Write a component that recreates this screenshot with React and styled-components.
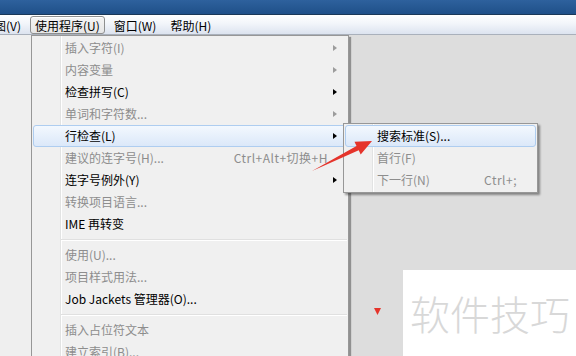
import React from 'react';
import styled, { createGlobalStyle, css } from 'styled-components';

const GlobalStyle = createGlobalStyle`
  html, body {
    margin: 0;
    padding: 0;
    overflow: hidden;
  }
  body {
    font-family: "Noto Sans CJK SC", "Noto Sans", sans-serif;
    font-size: 12px;
  }
`;

const Screen = styled.div`
  position: relative;
  width: 576px;
  height: 356px;
  overflow: hidden;
  display: flex;
  flex-direction: column;
  background: #dddddd;
`;

const TitleBar = styled.div`
  height: 14px;
  flex-shrink: 0;
  background: linear-gradient(to bottom, #2e619d, #1f5089);
  border-bottom: 1px solid #1a3858;
`;

const MenuBar = styled.div`
  height: 19px;
  flex-shrink: 0;
  display: flex;
  align-items: center;
  gap: 4px;
  background: linear-gradient(to bottom, #ffffff 0%, #f2f5fa 45%, #dce3ef 100%);
  border-bottom: 1px solid #a9b0bb;
`;

const BarItem = styled.div`
  height: 18px;
  line-height: 17px;
  padding: 0 4px;
  border: 1px solid transparent;
  border-radius: 3px;
  color: #000;
  white-space: nowrap;
  box-sizing: border-box;
  ${p => p.$first && css`margin-left: -23px;`}
  ${p => p.$open && css`
    border-color: #8e8f8f;
    background: linear-gradient(to bottom, #f4f4f4, #e6e6e6);
    box-shadow: inset 0 1px 0 #fff;
  `}
`;

const Workspace = styled.div`
  flex: 1;
  display: flex;
  align-items: flex-start;
  min-height: 0;
`;

const LeftPane = styled.div`
  width: 31px;
  align-self: stretch;
  background: #efefef;
`;

const gutter = css`
  background-color: #f0f0f0;
  background-image: linear-gradient(
    to right,
    transparent 28px,
    #e2e3e3 28px,
    #e2e3e3 29px,
    #ffffff 29px,
    #ffffff 30px,
    transparent 30px
  );
`;

const Menu = styled.div`
  width: 318px;
  box-sizing: border-box;
  border: 1px solid #979797;
  padding: 1px;
  ${gutter}
  box-shadow: 2px 2px 1px rgba(0, 0, 0, 0.35);
`;

const SubMenu = styled(Menu)`
  position: absolute;
  left: 343px;
  top: 123px;
  width: 195px;
  box-shadow: 2px 2px 2px rgba(0, 0, 0, 0.4);
`;

const Item = styled.div`
  display: grid;
  grid-template-columns: 1fr auto 18px;
  align-items: center;
  height: 22px;
  line-height: 20px;
  box-sizing: border-box;
  padding-left: 31px;
  border: 1px solid transparent;
  border-radius: 3px;
  color: ${p => (p.$disabled ? '#8d8d8d' : '#000')};
  white-space: nowrap;
  ${p => p.$active && css`
    border-color: #aecdf0;
    background: linear-gradient(to bottom, #f3f8fe, #dbe8f9);
  `}
`;

const Shortcut = styled.span`
  color: #8d8d8d;
  letter-spacing: 0.5px;
`;

const Arrow = styled.span`
  justify-self: start;
  margin-left: 5px;
  width: 0;
  height: 0;
  border-top: 3.5px solid transparent;
  border-bottom: 3.5px solid transparent;
  border-left: 4px solid ${p => (p.$disabled ? '#9c9c9c' : '#000')};
`;

const Separator = styled.div`
  height: 9px;
  margin-left: 28px;
  background: linear-gradient(
    to bottom,
    transparent 4px,
    #e0e0e0 4px,
    #e0e0e0 5px,
    #ffffff 5px,
    #ffffff 6px,
    transparent 6px
  );
`;

const Watermark = styled.div`
  position: absolute;
  left: 403px;
  top: 270px;
  width: 173px;
  height: 86px;
  background: #ffffff;
  display: flex;
  align-items: center;
  padding-left: 7px;
  box-sizing: border-box;
  font-size: 40px;
  font-weight: 300;
  color: #d8d8d8;
`;

const Overlay = styled.svg`
  position: absolute;
  left: 0;
  top: 0;
  pointer-events: none;
`;

const mainItems = [
  { label: '插入字符(I)', disabled: true, sub: true },
  { label: '内容变量', disabled: true, sub: true },
  { label: '检查拼写(C)', sub: true },
  { label: '单词和字符数...', disabled: true, sub: true },
  { label: '行检查(L)', sub: true, active: true },
  { label: '建议的连字号(H)...', disabled: true, shortcut: 'Ctrl+Alt+切换+H' },
  { label: '连字号例外(Y)', sub: true },
  { label: '转换项目语言...', disabled: true },
  { label: 'IME 再转变' },
  { sep: true },
  { label: '使用(U)...', disabled: true },
  { label: '项目样式用法...', disabled: true },
  { label: 'Job Jackets 管理器(O)...' },
  { sep: true },
  { label: '插入占位符文本', disabled: true },
  { label: '建立索引(B)...', disabled: true },
];

const subItems = [
  { label: '搜索标准(S)...', active: true },
  { label: '首行(F)', disabled: true },
  { label: '下一行(N)', disabled: true, shortcut: 'Ctrl+;' },
];

const renderItems = items =>
  items.map((it, i) =>
    it.sep ? (
      <Separator key={i} />
    ) : (
      <Item key={i} $disabled={it.disabled} $active={it.active}>
        <span>{it.label}</span>
        <Shortcut>{it.shortcut}</Shortcut>
        {it.sub ? <Arrow $disabled={it.disabled} /> : <span />}
      </Item>
    )
  );

const App = () => {
  return (
    <Screen>
      <GlobalStyle />
      <TitleBar />
      <MenuBar>
        <BarItem $first>视图(V)</BarItem>
        <BarItem $open>使用程序(U)</BarItem>
        <BarItem>窗口(W)</BarItem>
        <BarItem>帮助(H)</BarItem>
      </MenuBar>
      <Workspace>
        <LeftPane />
        <Menu>{renderItems(mainItems)}</Menu>
      </Workspace>

      <SubMenu>{renderItems(subItems)}</SubMenu>

      <Watermark>软件技巧</Watermark>

      <Overlay width="576" height="356" viewBox="0 0 576 356">
        <polygon
          points="312,171 356.5,145.9 354.5,141.8 372,141 360.7,154.4 358.7,150.3"
          fill="#e5342b"
        />
        <polygon points="374,308 381,308 377.5,315" fill="#e5342b" />
      </Overlay>
    </Screen>
  );
};

export default App;
